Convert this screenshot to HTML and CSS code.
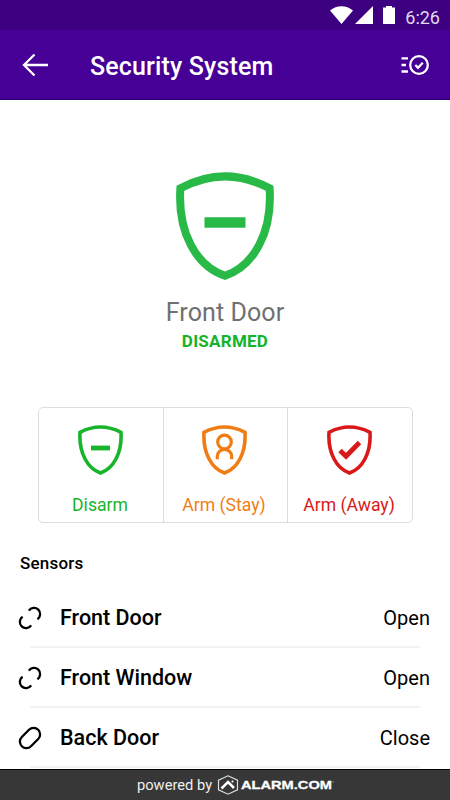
FILE: index.html
```html
<!DOCTYPE html>
<html lang="en">
<head>
    <meta charset="UTF-8">
    <meta name="viewport" content="width=device-width, initial-scale=1.0">
    <title>Security System</title>
    <link rel="stylesheet" href="styles.css">
</head>
<body>
    <div class="status-bar">
        <svg width="66" height="18" viewBox="0 0 66 18" fill="#fff">
            <path d="M0 4.500C6.500-1.200 16.500-1.200 23 4.500L11.500 18Z"/>
            <path d="M43 0V18H25Z"/>
            <path d="M53 1.500h3V0h6v1.500h3V18H53Z"/>
        </svg>
        <span class="time">6:26</span>
    </div>

    <header class="app-bar">
        <svg class="back" width="26" height="24" viewBox="0 0 26 24" fill="none" stroke="#fff" stroke-width="2.300">
            <path d="M26 12H2M12.500 1.500L2 12l10.500 10.500"/>
        </svg>
        <h1>Security System</h1>
        <svg class="history" width="28" height="20" viewBox="0 0 28 20" fill="none" stroke="#fff" stroke-width="2.300">
            <path d="M0.500 3.300h6.500M0.500 10h4.500M0.500 16.500h6.500"/>
            <circle cx="18" cy="10" r="8.800"/>
            <path d="M14.300 10l2.700 2.800 4.800-5"/>
        </svg>
    </header>

    <main>
        <section class="state">
            <svg width="98" height="109" viewBox="0 0 98 109" fill="none" stroke="#28b946" stroke-width="8">
                <path d="M4.400 16.300Q49-7.500 93.600 16.300C96.500 60 78 94 49 103.800C20 94 1.500 60 4.400 16.300Z"/>
                <path d="M28.500 50.500h41" stroke-width="10.600"/>
            </svg>
            <div class="name">Front Door</div>
            <div class="status">DISARMED</div>
        </section>

        <div class="actions">
            <button class="action disarm">
                <svg width="45" height="50" viewBox="0 0 45 50">
                    <path d="M2 7.300Q22.500-3.300 43 7.300C44.200 28 35.500 43.500 22.500 48C9.500 43.500.8 28 2 7.300Z"/>
                    <path d="M13 23h19" stroke-width="4.800"/>
                </svg>
                <span>Disarm</span>
            </button>
            <button class="action stay">
                <svg width="45" height="50" viewBox="0 0 45 50">
                    <path d="M2 7.300Q22.500-3.300 43 7.300C44.200 28 35.500 43.500 22.500 48C9.500 43.500.8 28 2 7.300Z"/>
                    <circle cx="22.500" cy="17" r="6.800" stroke-width="3.200"/>
                    <path d="M15.300 34.300V31.500a7.200 7.200 0 0 1 14.400 0V34.300" stroke-width="3.200"/>
                </svg>
                <span>Arm (Stay)</span>
            </button>
            <button class="action away">
                <svg width="45" height="50" viewBox="0 0 45 50">
                    <path d="M2 7.300Q22.500-3.300 43 7.300C44.200 28 35.500 43.500 22.500 48C9.500 43.500.8 28 2 7.300Z"/>
                    <path d="M13 25.500l6 5.800L32.500 17.500" stroke-width="4.800"/>
                </svg>
                <span>Arm (Away)</span>
            </button>
        </div>

        <h2>Sensors</h2>
        <ul class="sensors">
            <li>
                <svg width="24" height="24" viewBox="0 0 24 24">
                    <path d="M10.800 4.600A6.200 6.200 0 1 1 19.400 13.200M13.200 19.400A6.200 6.200 0 1 1 4.600 10.800"/>
                </svg>
                <span class="label">Front Door</span>
                <span class="value">Open</span>
            </li>
            <li>
                <svg width="24" height="24" viewBox="0 0 24 24">
                    <path d="M10.800 4.600A6.200 6.200 0 1 1 19.400 13.200M13.200 19.400A6.200 6.200 0 1 1 4.600 10.800"/>
                </svg>
                <span class="label">Front Window</span>
                <span class="value">Open</span>
            </li>
            <li>
                <svg width="24" height="24" viewBox="0 0 24 24">
                    <rect x=".4" y="5.500" width="23.200" height="13" rx="6.500" transform="rotate(-45 12 12)"/>
                </svg>
                <span class="label">Back Door</span>
                <span class="value">Close</span>
            </li>
        </ul>
    </main>

    <footer>
        <span>powered by</span>
        <svg class="brand" width="117" height="20" viewBox="0 0 117 20">
            <path d="M11 .8L20.500 5.200V14.800L11 19.200L1.500 14.800V5.200Z" fill="none" stroke="#ddd" stroke-width="1.200"/>
            <path d="M4.500 13.500L11 7L17 13" fill="none" stroke="#fff" stroke-width="2.500"/>
            <circle cx="15.500" cy="6.500" r="1.100" fill="#fff"/>
            <text x="24" y="14" textLength="91" lengthAdjust="spacingAndGlyphs">ALARM.COM</text>
            <circle cx="116" cy="7" r=".7" fill="#aaa"/>
        </svg>
    </footer>
</body>
</html>
```
FILE: styles.css
```css
* {
    box-sizing: border-box;
}
body {
    margin: 0;
    height: 100vh;
    display: flex;
    flex-direction: column;
    overflow: hidden;
    background-color: #fff;
    color: #000;
    font-family: Roboto, sans-serif;
}
svg {
    display: block;
    flex: none;
}
.status-bar {
    height: 30px;
    flex: none;
    display: flex;
    justify-content: flex-end;
    align-items: flex-start;
    padding: 6px 10px 0 0;
    background-color: #3c0080;
}
.time {
    margin-left: 9px;
    font-size: 18px;
    line-height: 23px;
    color: #e2d9ec;
}
.app-bar {
    height: 70px;
    flex: none;
    display: flex;
    align-items: center;
    padding: 0 21px 0 22px;
    background-color: #460096;
    border-bottom: 1px solid #1f006b;
}
h1 {
    flex: 1;
    margin: 4px 0 0 42px;
    font-size: 25px;
    font-weight: 500;
    line-height: 30px;
    letter-spacing: 0.15px;
    color: #fff;
}
main {
    flex: 1;
    min-height: 0;
    overflow: hidden;
}
.state {
    display: flex;
    flex-direction: column;
    align-items: center;
    height: 307px;
    padding-top: 72px;
}
.name {
    margin-top: 16px;
    font-size: 25px;
    line-height: 32px;
    letter-spacing: 0.1px;
    color: #707070;
}
.status {
    margin-top: 1px;
    font-size: 17px;
    font-weight: 700;
    line-height: 22px;
    letter-spacing: 0.25px;
    color: #14b428;
}
.actions {
    display: grid;
    grid-template-columns: 124px 124px 1fr;
    width: 375px;
    height: 116px;
    margin: 0 auto 0 38px;
    border: 1.500px solid #ddd;
    border-radius: 5px;
}
.action {
    display: flex;
    flex-direction: column;
    align-items: center;
    padding: 17px 2px 0 0;
    background: none;
    border: none;
    border-left: 1px solid #ddd;
    font-family: inherit;
    font-size: 17.6px;
    line-height: 24px;
}
.action:first-child {
    border-left: none;
}
.action svg {
    margin-bottom: 18px;
    fill: none;
    stroke: currentColor;
    stroke-width: 3.6;
}
.disarm {
    color: #18b42c;
}
.stay {
    padding-right: 3px;
    color: #f07d14;
}
.away {
    color: #d91919;
}
h2 {
    margin: 29px 0 14px 20px;
    font-size: 17px;
    font-weight: 500;
    line-height: 22px;
    letter-spacing: 0.2px;
}
.sensors {
    margin: 0;
    padding: 0;
    list-style: none;
}
.sensors li {
    display: flex;
    align-items: center;
    height: 60px;
    padding: 0 20px 0 18px;
    background: linear-gradient(#f2f2f2, #f2f2f2) 30px 100% / 390px 2px no-repeat;
}
.sensors svg {
    fill: none;
    stroke: #000;
    stroke-width: 2.3;
}
.label {
    flex: 1;
    margin-left: 18px;
    padding-bottom: 1px;
    font-size: 21.5px;
    font-weight: 500;
}
.value {
    font-size: 20px;
}
footer {
    height: 31px;
    flex: none;
    display: flex;
    align-items: center;
    padding-left: 137px;
    background-color: #373737;
    border-top: 1px solid #000;
    color: #eee;
    font-size: 14.7px;
}
.brand {
    margin-left: 5px;
}
.brand text {
    font-family: "Liberation Sans", sans-serif;
    font-size: 11.500px;
    font-weight: 700;
    fill: #fff;
    stroke: #fff;
    stroke-width: 0.3;
}
```
